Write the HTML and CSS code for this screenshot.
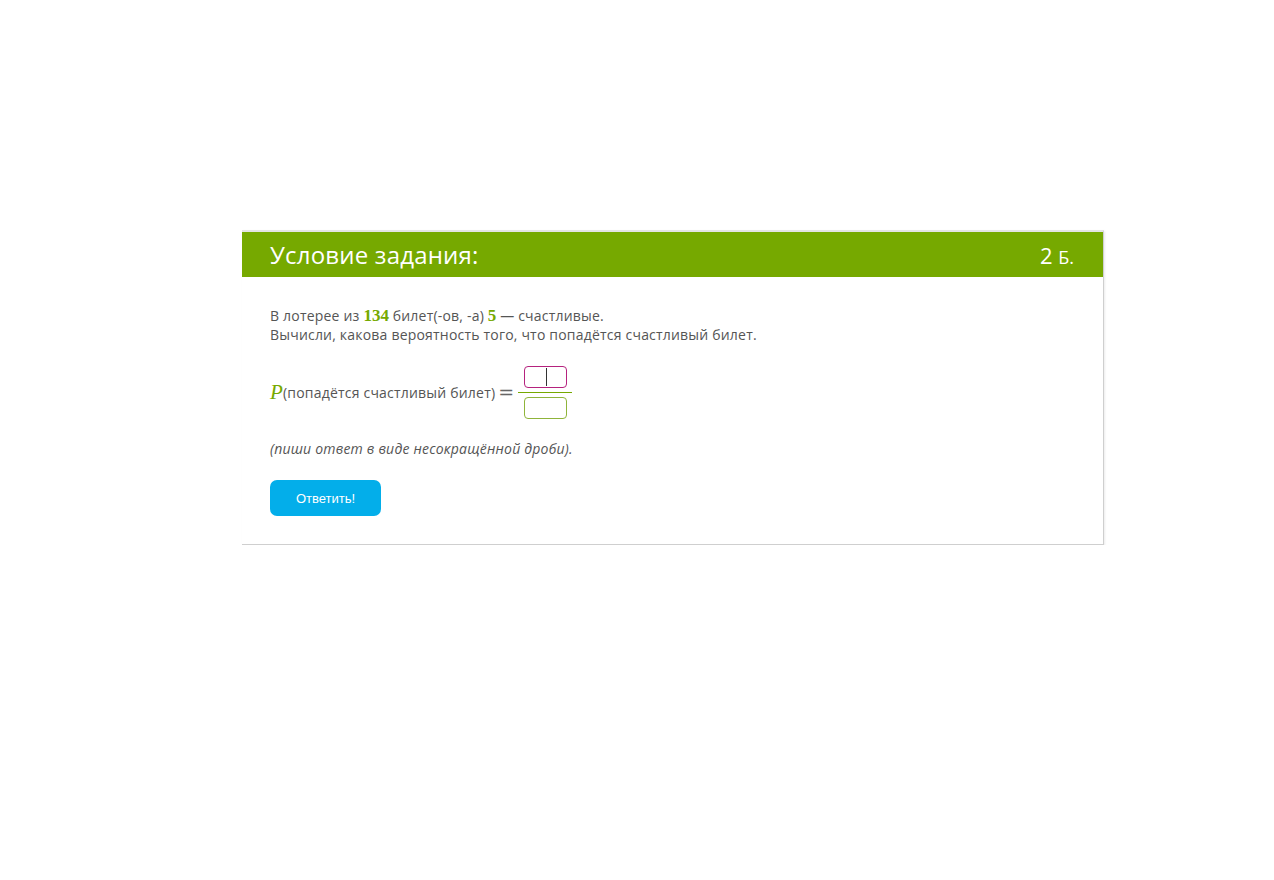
FILE: index.html
```html
<!DOCTYPE html>
<html lang="ru">
<head>
    <meta charset="UTF-8">
    <title>Условие задания</title>
    <link rel="stylesheet" href="styles.css">
</head>
<body>
    <div class="task">
        <div class="task-head">
            <span class="task-title">Условие задания:</span>
            <span class="task-score">2 <small>Б.</small></span>
        </div>
        <div class="task-body">
            <p class="text">
                В лотерее из <span class="num">134</span> билет(-ов, -а) <span class="num">5</span> — счастливые.<br>
                Вычисли, какова вероятность того, что попадётся счастливый билет.
            </p>
            <div class="formula">
                <span class="var">P</span><span>(попадётся счастливый билет)</span>
                <span class="eq">=</span>
                <span class="frac">
                    <span class="box top"><span class="caret"></span></span>
                    <span class="line"></span>
                    <span class="box bottom"></span>
                </span>
            </div>
            <p class="hint">(пиши ответ в виде несокращённой дроби).</p>
            <button class="answer">Ответить!</button>
        </div>
    </div>
</body>
</html>
```

FILE: styles.css
```css
body {
    margin: 0;
    background: #fff;
    font-family: 'Open Sans', sans-serif;
    color: #555;
}
.task {
    width: 861px;
    margin: 230px 0 0 242px;
    border-top: 2px solid #e4e4e4;
    border-right: 1px solid #cfcfcf;
    border-bottom: 1px solid #cfcfcf;
    box-shadow: 1px 1px 2px rgba(0, 0, 0, 0.08);
}
.task-head {
    background: #76a900;
    color: #fff;
    height: 45px;
    padding: 0 29px 0 28px;
    display: flex;
    align-items: center;
    justify-content: space-between;
}
.task-title {
    font-size: 24px;
    letter-spacing: 0.2px;
}
.task-score {
    font-size: 22px;
}
.task-score small {
    font-size: 18px;
}
.task-body {
    padding: 29px 28px 28px;
    font-size: 14px;
    letter-spacing: 0.2px;
}
.text {
    margin: 0;
    line-height: 19px;
}
.num {
    font-family: 'Liberation Serif', serif;
    font-weight: bold;
    font-size: 17px;
    letter-spacing: 0;
    color: #76a900;
}
.formula {
    display: flex;
    align-items: center;
    margin-top: 22px;
    height: 52px;
}
.var {
    font-family: 'Liberation Serif', serif;
    font-style: italic;
    font-size: 21px;
    color: #76a900;
}
.eq {
    font-family: 'DejaVu Serif', serif;
    font-size: 19px;
    margin: 0 4px 0 3px;
    color: #666;
}
.frac {
    display: flex;
    flex-direction: column;
    align-items: center;
    width: 54px;
}
.box {
    width: 41px;
    height: 20px;
    border-radius: 4px;
    position: relative;
}
.top {
    border: 1px solid #b5227e;
}
.bottom {
    border: 1px solid #8fb43a;
}
.line {
    align-self: stretch;
    margin: 4px 0;
    border-top: 1px solid #76a900;
}
.caret {
    position: absolute;
    left: 21px;
    top: 1px;
    height: 18px;
    border-left: 1px solid #333;
}
.hint {
    margin: 21px 0 0;
    font-style: italic;
    line-height: 19px;
}
.answer {
    margin-top: 22px;
    width: 111px;
    height: 36px;
    border: none;
    border-radius: 7px;
    background: #03aeea;
    color: #fff;
    font-family: 'Liberation Sans', Arial, sans-serif;
    font-size: 13px;
    cursor: pointer;
}
```
